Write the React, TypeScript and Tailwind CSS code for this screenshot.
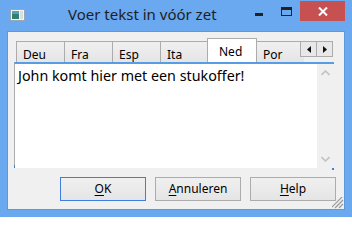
import React from "react";

const font = { fontFamily: '"Segoe UI", "Noto Sans", "Open Sans", sans-serif' };

function Tab({ label, selected }: { label: string; selected?: boolean }) {
  if (selected) {
    return (
      <div className="relative z-10 -mx-[1px] flex h-[24px] w-[50px] items-start border border-b-0 border-[#acacac] bg-white pl-[11px] pt-[4px] text-[12px] text-black">
        {label}
      </div>
    );
  }
  return (
    <div className="flex h-[21px] w-[48px] shrink-0 items-start border border-r-0 border-b-0 border-[#acacac] bg-gradient-to-b from-[#f0f0f0] to-[#e5e5e5] pl-[6px] pt-[4px] text-[12px] text-black">
      {label}
    </div>
  );
}

function Btn({ u, rest, focus }: { u: string; rest: string; focus?: boolean }) {
  return (
    <div
      className={`flex h-[24px] w-[86px] items-center justify-center border bg-gradient-to-b from-[#f0f0f0] to-[#e5e5e5] text-[12px] text-black ${
        focus ? "border-[#3c7fe1]" : "border-[#acacac]"
      }`}
    >
      <span>
        <span className="underline underline-offset-2">{u}</span>
        {rest}
      </span>
    </div>
  );
}

export default function App() {
  return (
    <div className="flex h-[217px] w-[352px] flex-col bg-[#6aa8f0]" style={font}>
      {/* Title bar */}
      <div className="relative flex h-[31px] shrink-0 items-start">
        <svg className="ml-[10px] mt-[9px]" width="15" height="12" viewBox="0 0 15 12">
          <rect x="0.5" y="0.5" width="14" height="11" fill="#f4f4f4" stroke="#9aa6b2" />
          <rect x="2" y="2" width="7" height="8" fill="#2f7f73" />
          <rect x="2" y="2" width="7" height="3" fill="#5a9fb0" />
          <rect x="10" y="2" width="3" height="8" fill="#d8dde2" />
        </svg>
        <div className="ml-[43px] mt-[4px] text-[15px] leading-[20px] text-[#1e1e1e]">Voer tekst in vóór zet</div>
        <div className="absolute right-[7px] top-[1px] flex items-start">
          <div className="mr-[18px] mt-[12px] h-[3px] w-[8px] bg-[#222]" />
          <div className="mr-[8px] mt-[6px] h-[9px] w-[11px] border border-t-[3px] border-[#222]" />
          <div className="flex h-[20px] w-[45px] items-center justify-center bg-[#c75050]">
            <svg width="10" height="9" viewBox="0 0 10 9">
              <path d="M1 0.5 L9 8.5 M9 0.5 L1 8.5" stroke="white" strokeWidth="2" />
            </svg>
          </div>
        </div>
      </div>

      {/* Client area */}
      <div className="mx-[7px] mb-[7px] flex flex-1 flex-col border border-[#5d97dc] bg-[#f0f0f0]">
        <div className="relative h-[177px]">
          {/* tabs */}
          <div className="flex items-end pl-[8px] pt-[6px]">
            <Tab label="Deu" />
            <Tab label="Fra" />
            <Tab label="Esp" />
            <Tab label="Ita" />
            <Tab label="Ned" selected />
            <Tab label="Por" />
            <div className="absolute left-[292px] top-[9px] z-20 flex">
              <div className="flex h-[16px] w-[17px] items-center justify-center border border-[#acacac] bg-[#e8e8e8]">
                <svg width="4" height="7" viewBox="0 0 4 7">
                  <path d="M4 0 L0 3.5 L4 7 Z" fill="#111" />
                </svg>
              </div>
              <div className="-ml-[1px] flex h-[16px] w-[17px] items-center justify-center border border-[#acacac] bg-[#e8e8e8]">
                <svg width="4" height="7" viewBox="0 0 4 7">
                  <path d="M0 0 L4 3.5 L0 7 Z" fill="#111" />
                </svg>
              </div>
            </div>
          </div>
          {/* panel with textbox */}
          <div className="relative ml-[6px] flex h-[106px] w-[320px] border-t-2 border-l border-t-[#569de5] border-l-[#acacac] bg-white">
            <div className="flex-1 pl-[3px] pt-[2px] text-[14.3px] leading-[20px] text-black">
              John komt hier met een stukoffer!
            </div>
            <div className="flex w-[17px] flex-col items-center justify-between bg-[#f0f0f0] pb-[6px] pt-[6px]">
              <svg width="9" height="6" viewBox="0 0 9 6">
                <path d="M0.5 5 L4.5 1 L8.5 5" stroke="#c2c2c2" strokeWidth="1.6" fill="none" />
              </svg>
              <svg width="9" height="6" viewBox="0 0 9 6">
                <path d="M0.5 1 L4.5 5 L8.5 1" stroke="#c2c2c2" strokeWidth="1.6" fill="none" />
              </svg>
            </div>
            <div className="absolute -left-[1px] bottom-0 h-[3px] w-[1px] bg-[#3c7fe1]" />
            <div className="absolute -bottom-[2px] right-0 h-[2px] w-[2px] bg-[#3c7fe1]" />
          </div>
          {/* buttons */}
          <div className="mt-[9px] flex gap-[9px] pl-[52px]">
            <Btn u="O" rest="K" focus />
            <Btn u="A" rest="nnuleren" />
            <Btn u="H" rest="elp" />
          </div>
          <svg className="absolute bottom-[0px] right-[0px]" width="12" height="12" viewBox="0 0 12 12">
            <path d="M11 3 L3 11 M11 7 L7 11 M11 -1 L-1 11" stroke="#9a9a9a" strokeWidth="1.2" />
          </svg>
        </div>
      </div>
    </div>
  );
}
